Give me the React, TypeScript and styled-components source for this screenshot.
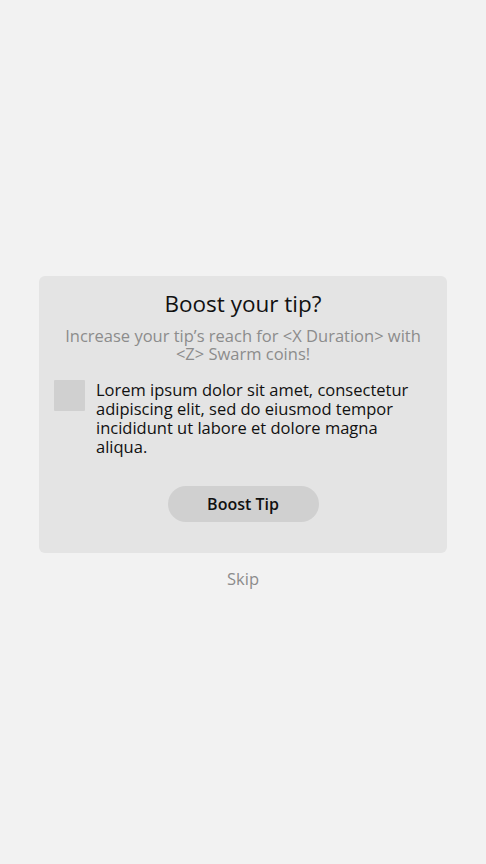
import React from "react";
import styled, { createGlobalStyle } from "styled-components";

const Global = createGlobalStyle`
  html, body { margin: 0; padding: 0; background: #f2f2f2; }
  body { font-family: "Open Sans", "Liberation Sans", sans-serif; }
  * { box-sizing: border-box; }
`;

const Page = styled.div`
  min-height: 864px;
  display: flex;
  flex-direction: column;
  align-items: center;
  padding-top: 276px;
`;

const Card = styled.div`
  width: 408px;
  height: 277px;
  background: #e4e4e4;
  border-radius: 6px;
  display: flex;
  flex-direction: column;
  align-items: center;
  padding: 14px 15px 0 15px;
`;

const Title = styled.h1`
  margin: 0;
  font-weight: 400;
  font-size: 22.5px;
  line-height: 28px;
  color: #111;
`;

const Subtitle = styled.p`
  margin: 9px 0 0 0;
  text-align: center;
  font-size: 16.5px;
  line-height: 18px;
  color: #8c8c8c;
  width: 372px;
`;

const Row = styled.div`
  align-self: stretch;
  display: flex;
  gap: 11px;
  margin-top: 17px;
  align-items: flex-start;
`;

const Box = styled.div`
  flex: 0 0 31px;
  height: 31px;
  background: #d0d0d0;
  border-radius: 1px;
`;

const Text = styled.p`
  margin: 0;
  width: 330px;
  font-size: 16.5px;
  line-height: 19px;
  color: #111;
`;

const Button = styled.button`
  margin-top: 30px;
  width: 151px;
  height: 36px;
  border: none;
  border-radius: 18px;
  background: #d0d0d0;
  font-family: inherit;
  font-weight: 600;
  font-size: 16px;
  color: #111;
`;

const Skip = styled.div`
  margin-top: 16px;
  font-size: 16.5px;
  line-height: 20px;
  color: #8c8c8c;
`;

export default function App() {
  return (
    <>
      <Global />
      <Page>
        <Card>
          <Title>Boost your tip?</Title>
          <Subtitle>Increase your tip’s reach for &lt;X Duration&gt; with &lt;Z&gt; Swarm coins!</Subtitle>
          <Row>
            <Box />
            <Text>
              Lorem ipsum dolor sit amet, consectetur adipiscing elit, sed do eiusmod tempor incididunt ut labore et dolore magna aliqua.
            </Text>
          </Row>
          <Button>Boost Tip</Button>
        </Card>
        <Skip>Skip</Skip>
      </Page>
    </>
  );
}
